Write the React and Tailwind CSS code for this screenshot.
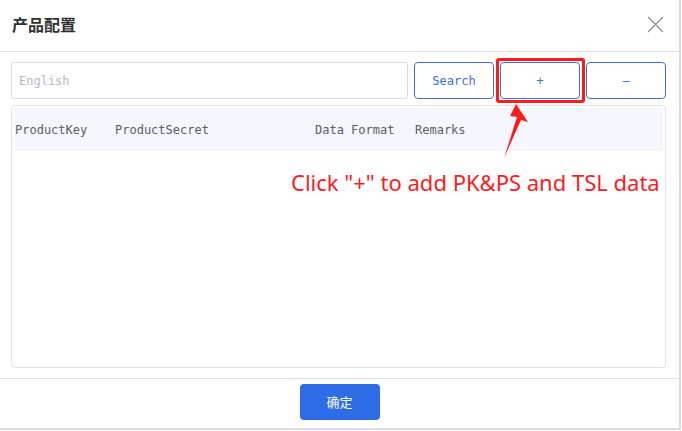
import React from 'react';

const mono = { fontFamily: '"DejaVu Sans Mono", "Liberation Mono", "Noto Sans CJK SC", monospace' };

const columns = [
  { name: 'ProductKey', width: 'w-[100px]' },
  { name: 'ProductSecret', width: 'w-[200px]' },
  { name: 'Data Format', width: 'w-[100px]' },
  { name: 'Remarks', width: 'w-[100px]' },
];

const App = () => {
  return (
    <div className="w-[682px] h-[431px] bg-white overflow-hidden">
      <div className="relative w-[681px] h-[430px] bg-white border-r-2 border-b-2 border-[#dcdcdc] flex flex-col font-['Noto_Sans_CJK_SC',sans-serif]">
        {/* Header */}
        <div className="h-[52px] flex items-center justify-between pl-[12px] pr-[15px] pb-[3px] border-b border-[#e3e3e3] shrink-0">
          <span className="text-[16px] font-bold text-[#303133] leading-none">产品配置</span>
          <svg className="w-[17px] h-[17px] text-[#8c8f99]" viewBox="0 0 16 16" fill="none" stroke="currentColor" strokeWidth="1.2">
            <path d="M1 1L15 15M15 1L1 15" />
          </svg>
        </div>

        {/* Body */}
        <div className="flex-1 flex flex-col pt-[10px] pl-[11px] pr-[13px] pb-[10px]">
          <div className="flex items-center gap-[6px] h-[37px]" style={mono}>
            <div className="flex-1 h-full border border-[#dedede] rounded-[2px] flex items-center pl-[7px] text-[12px] text-[#b4b9c6]">
              English
            </div>
            <button className="w-[80px] h-full border border-[#3a6fe2] rounded-[4px] text-[12px] text-[#3a6fe2] bg-white">
              Search
            </button>
            <button className="w-[80px] h-full border border-[#3a6fe2] rounded-[4px] text-[12px] text-[#3a6fe2] bg-white">
              +
            </button>
            <button className="w-[80px] h-full border border-[#3a6fe2] rounded-[4px] text-[12px] text-[#3a6fe2] bg-white">
              –
            </button>
          </div>

          <div className="mt-[6px] flex-1 border border-[#e2e2e2] rounded-[4px] pt-[2px] px-[2px]">
            <div className="h-[43px] bg-[#f4f7fe] flex items-center pl-[1px] text-[12px] text-[#5a5e66]" style={mono}>
              {columns.map((col) => (
                <div key={col.name} className={col.width}>{col.name}</div>
              ))}
            </div>
          </div>
        </div>

        {/* Footer */}
        <div className="h-[50px] border-t border-[#e3e3e3] flex justify-center pt-[5px] shrink-0">
          <button className="w-[80px] h-[36px] bg-[#2f6ce8] rounded-[4px] text-white text-[13px]">
            确定
          </button>
        </div>

        {/* Annotation overlay */}
        <div className="absolute left-[496px] top-[58px] w-[89px] h-[45px] border-[3px] border-[#ff1a1a] rounded-[3px]"></div>
        <svg className="absolute left-[498px] top-[104px]" width="32" height="56" viewBox="0 0 32 56">
          <path d="M18 0 L30 18 L23 16 L6 54 L19 13 L12 12 Z" fill="#ff1a1a" />
        </svg>
        <div className="absolute left-[291px] top-[166px] text-[22px] text-[#ff1a1a] leading-[32px] whitespace-nowrap font-['Noto_Sans',sans-serif]">
          Click "+" to add PK&amp;PS and TSL data
        </div>
      </div>
    </div>
  );
};

export default App;
